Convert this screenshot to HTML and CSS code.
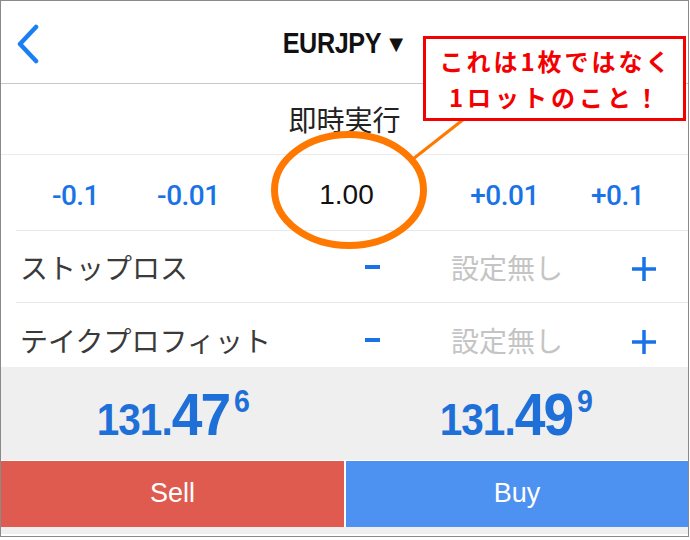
FILE: index.html
```html
<!DOCTYPE html>
<html lang="ja">

<head>
    <meta charset="UTF-8">
    <meta name="viewport" content="width=device-width, initial-scale=1.0">
    <title>EURJPY 注文</title>
    <link rel="stylesheet" href="styles.css">
</head>

<body>
    <div class="frame">
        <header class="topbar">
            <svg class="back" width="24" height="40" viewBox="0 0 24 40">
                <path d="M20 3 L4 20 L20 37" fill="none" stroke="#1a7ef5" stroke-width="4.5"
                    stroke-linecap="round" stroke-linejoin="round" />
            </svg>
            <h1 class="symbol"><span class="symbol-name">EURJPY</span> <span class="caret">▼</span></h1>
        </header>

        <div class="mode">即時実行</div>

        <div class="lots">
            <span class="step">-0.1</span>
            <span class="step">-0.01</span>
            <span class="volume">1.00</span>
            <span class="step">+0.01</span>
            <span class="step">+0.1</span>
        </div>

        <div class="field">
            <span class="field-label">ストップロス</span>
            <span class="minus"></span>
            <span class="field-value">設定無し</span>
            <svg class="plus" width="26" height="26" viewBox="0 0 26 26">
                <path d="M13 1 V25 M1 13 H25" stroke="#1a73e6" stroke-width="3.5" />
            </svg>
        </div>

        <div class="field field-last">
            <span class="field-label">テイクプロフィット</span>
            <span class="minus"></span>
            <span class="field-value">設定無し</span>
            <svg class="plus" width="26" height="26" viewBox="0 0 26 26">
                <path d="M13 1 V25 M1 13 H25" stroke="#1a73e6" stroke-width="3.5" />
            </svg>
        </div>

        <div class="prices">
            <div class="price">131.<b>47</b><sup>6</sup></div>
            <div class="price">131.<b>49</b><sup>9</sup></div>
        </div>

        <div class="actions">
            <div class="btn sell">Sell</div>
            <div class="btn buy">Buy</div>
        </div>

        <!-- annotation drawn over the screen -->
        <svg class="marks" width="689" height="537" viewBox="0 0 689 537">
            <line x1="412" y1="158" x2="463" y2="118" stroke="#ff7800" stroke-width="3" />
            <ellipse cx="348" cy="189" rx="74.5" ry="55.5" fill="none" stroke="#ff7800" stroke-width="7" />
        </svg>
        <div class="callout">
            <p>これは1枚ではなく</p>
            <p class="second">1ロットのこと！</p>
        </div>
    </div>
</body>

</html>
```

FILE: styles.css
```css
* {
    box-sizing: border-box;
    margin: 0;
    padding: 0;
}

body {
    font-family: "Liberation Sans", "Noto Sans CJK JP", sans-serif;
    background-color: white;
}

.frame {
    position: relative;
    width: 689px;
    height: 537px;
    border: 1px solid #8a8a8a;
    overflow: hidden;
    display: flex;
    flex-direction: column;
}

.topbar {
    height: 83px;
    flex: none;
    display: flex;
    align-items: center;
    justify-content: center;
    border-bottom: 1px solid #c8c8c8;
}

.back {
    position: absolute;
    left: 15px;
    top: 23px;
}

.symbol {
    font-size: 30px;
    font-weight: bold;
    color: #111;
    margin-left: -22px;
    margin-top: 2px;
    white-space: nowrap;
}

/* the app uses a condensed face */
.symbol-name {
    display: inline-block;
    transform: scaleX(0.84);
    transform-origin: right center;
    letter-spacing: -0.5px;
}

.caret {
    font-family: "DejaVu Sans", sans-serif;
    font-size: 18px;
    vertical-align: 3px;
}

.mode {
    height: 71px;
    flex: none;
    display: flex;
    align-items: center;
    justify-content: center;
    font-family: "Noto Sans CJK JP", sans-serif;
    font-size: 28px;
    color: #222;
    border-bottom: 1px solid #ececec;
}

.lots {
    height: 75px;
    flex: none;
    display: grid;
    grid-template-columns: 1fr 1fr 1.8fr 1fr 1fr;
    align-items: center;
    justify-items: center;
    padding: 5px 14px 0 18px;
}

.step {
    font-family: Roboto, "Liberation Sans", sans-serif;
    font-size: 28px;
    font-weight: 500;
    color: #1a73e6;
    letter-spacing: -0.5px;
}

.volume {
    font-size: 28px;
    color: #111;
}

.field {
    height: 72px;
    flex: none;
    margin-left: 15px;
    padding-left: 4px;
    border-top: 1px solid #e8e8e8;
    display: grid;
    grid-template-columns: 1fr 84px 186px 88px;
    align-items: center;
    justify-items: center;
    font-family: "Noto Sans CJK JP", sans-serif;
    font-size: 28px;
}

.field-last {
    height: 65px;
    padding-top: 10px;
}

.field-label {
    justify-self: start;
    color: #3a3a3a;
}

.field-value {
    color: #c4c4c4;
}

.minus {
    width: 15px;
    height: 4px;
    background-color: #1a73e6;
}

.plus {
    margin-top: 4px;
}

.prices {
    height: 93px;
    flex: none;
    background-color: #efefef;
    display: grid;
    grid-template-columns: 1fr 1fr;
    align-items: center;
    justify-items: center;
    padding-top: 2px;
}

.price {
    font-weight: bold;
    font-size: 44px;
    color: #1f6fd8;
    line-height: 1;
    display: flex;
    align-items: baseline;
    transform: scaleX(0.92);
    letter-spacing: -1px;
}

.price b {
    font-size: 60px;
    letter-spacing: -2px;
}

.price sup {
    font-size: 31px;
    align-self: flex-start;
    margin-left: 5px;
    margin-top: 1px;
}

.actions {
    height: 74px;
    flex: none;
    display: grid;
    grid-template-columns: 343px 1fr;
    gap: 2px;
    background-color: white;
    padding-top: 1px;
    border-bottom: 7px solid #efefef;
}

.btn {
    display: flex;
    align-items: center;
    justify-content: center;
    font-size: 27px;
    color: white;
    padding-bottom: 2px;
}

.sell {
    background-color: #df5b4f;
}

.buy {
    background-color: #4d91f1;
}

.marks {
    position: absolute;
    left: 0;
    top: 0;
    pointer-events: none;
}

.callout {
    position: absolute;
    left: 422px;
    top: 35px;
    width: 263px;
    height: 85px;
    border: 3px solid #f40000;
    background-color: white;
    font-family: "Noto Sans CJK JP", sans-serif;
    font-weight: bold;
    font-size: 24px;
    color: #f40000;
    text-align: center;
    line-height: 36px;
    letter-spacing: 3px;
    padding-top: 4px;
    padding-left: 3px;
}

.callout .second {
    letter-spacing: 4px;
}
```
